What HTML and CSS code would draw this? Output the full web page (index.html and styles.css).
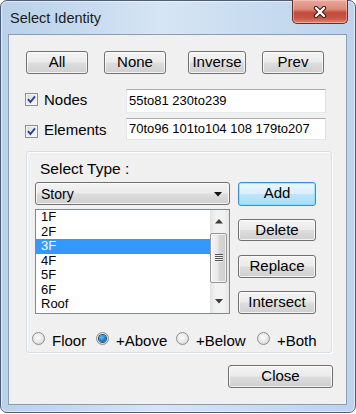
FILE: index.html
```html
<!DOCTYPE html>
<html lang="en">
<head>
    <meta charset="UTF-8">
    <meta name="viewport" content="width=device-width, initial-scale=1.0">
    <title>Select Identity</title>
    <link rel="stylesheet" href="styles.css">
</head>
<body>

<div class="window">
    <div class="titlebar">
        <span class="title">Select Identity</span>
        <div class="close-x">
            <svg width="16" height="12" viewBox="0 0 16 12">
                <path d="M4 2 L12 10 M12 2 L4 10" stroke="#3a1712" stroke-width="4.4" stroke-linecap="round"/>
                <path d="M4 2 L12 10 M12 2 L4 10" stroke="#ffffff" stroke-width="2.4" stroke-linecap="round"/>
            </svg>
        </div>
    </div>

    <div class="client">
        <div class="btn-row">
            <button class="btn btn-62">All</button>
            <button class="btn btn-62 gap-16">None</button>
            <button class="btn btn-58 gap-22">Inverse</button>
            <button class="btn btn-62 gap-16">Prev</button>
        </div>

        <div class="field-row nodes-row">
            <span class="checkbox">
                <svg width="11" height="11" viewBox="0 0 11 11"><path d="M2 5.2 L4.4 8 L9 2.4" fill="none" stroke="#23449a" stroke-width="1.9"/></svg>
            </span>
            <span class="field-label">Nodes</span>
            <div class="textbox">55to81 230to239</div>
        </div>

        <div class="field-row elements-row">
            <span class="checkbox">
                <svg width="11" height="11" viewBox="0 0 11 11"><path d="M2 5.2 L4.4 8 L9 2.4" fill="none" stroke="#23449a" stroke-width="1.9"/></svg>
            </span>
            <span class="field-label">Elements</span>
            <div class="textbox">70to96 101to104 108 179to207</div>
        </div>

        <div class="group">
            <div class="group-label">Select Type :</div>
            <div class="type-area">
                <div class="type-left">
                    <div class="combo">
                        <span>Story</span>
                        <svg class="combo-arrow" width="8" height="5" viewBox="0 0 8 5"><path d="M0 0 H8 L4 4.5 Z" fill="#111"/></svg>
                    </div>
                    <div class="listbox">
                        <ul class="items">
                            <li>1F</li>
                            <li>2F</li>
                            <li class="selected">3F</li>
                            <li>4F</li>
                            <li>5F</li>
                            <li>6F</li>
                            <li>Roof</li>
                        </ul>
                        <div class="scrollbar">
                            <div class="sb-arrow">
                                <svg width="8" height="5" viewBox="0 0 8 5"><path d="M0 4.5 H8 L4 0 Z" fill="#3c3c3c"/></svg>
                            </div>
                            <div class="sb-thumb"><span class="grip"></span></div>
                            <div class="sb-track"></div>
                            <div class="sb-arrow">
                                <svg width="8" height="5" viewBox="0 0 8 5"><path d="M0 0 H8 L4 4.5 Z" fill="#3c3c3c"/></svg>
                            </div>
                        </div>
                    </div>
                </div>
                <div class="type-right">
                    <button class="btn btn-side btn-default">Add</button>
                    <button class="btn btn-side mt-13">Delete</button>
                    <button class="btn btn-side mt-14">Replace</button>
                    <button class="btn btn-side mt-13">Intersect</button>
                </div>
            </div>

            <div class="radio-row">
                <div class="option"><span class="radio"></span><span class="opt-label">Floor</span></div>
                <div class="option"><span class="radio checked"><span class="dot"></span></span><span class="opt-label">+Above</span></div>
                <div class="option"><span class="radio"></span><span class="opt-label">+Below</span></div>
                <div class="option"><span class="radio"></span><span class="opt-label">+Both</span></div>
            </div>
        </div>

        <div class="close-row">
            <button class="btn btn-close">Close</button>
        </div>
    </div>
</div>

</body>
</html>
```

FILE: styles.css
```css
body {
    margin: 0;
    background: #ffffff;
    font-family: "Liberation Sans", Arial, sans-serif;
    color: #000;
}

/* window frame */
.window {
    width: 356px;
    height: 413px;
    box-sizing: border-box;
    border: 1px solid #4b5d78;
    border-radius: 7px;
    background: linear-gradient(90deg, #bad1ea 0%, #c8dbef 25%, #d6e5f4 45%, #c9dcf0 70%, #bdd3ec 100%);
    box-shadow: inset 0 0 0 1px rgba(255, 255, 255, 0.55);
    display: flex;
    flex-direction: column;
}
.titlebar {
    height: 33px;
    display: flex;
    align-items: flex-start;
}
.title {
    font-size: 14.5px;
    line-height: 18px;
    margin: 8px 0 0 9px;
    color: #1b1b1b;
}
.close-x {
    margin: -1px 7px 0 auto;
    width: 56px;
    height: 24px;
    box-sizing: border-box;
    border: 1px solid #6e2c22;
    border-top: none;
    border-radius: 0 0 5px 5px;
    background: linear-gradient(#e9a99c 0%, #dc8b7c 40%, #c4493a 55%, #c85646 80%, #dc8a72 100%);
    box-shadow: inset 0 0 0 1px rgba(255, 220, 210, 0.45);
    display: flex;
    align-items: center;
    justify-content: center;
}

/* client area */
.client {
    margin: 0 8px 0 7px;
    height: 371px;
    box-sizing: border-box;
    border: 1px solid #8b9db5;
    background: #f0f0f0;
}

/* buttons */
.btn {
    height: 23px;
    box-sizing: border-box;
    border: 1px solid #707070;
    border-radius: 3px;
    background: linear-gradient(#f3f3f3 0%, #ebebeb 48%, #dddddd 52%, #cfcfcf 100%);
    box-shadow: inset 0 0 0 1px rgba(255, 255, 255, 0.75);
    font-family: inherit;
    font-size: 15px;
    line-height: 18px;
    color: #000;
    padding: 0 0 1px;
    margin: 0;
}
.btn-62 { width: 62px; }
.btn-58 { width: 58px; }
.gap-16 { margin-left: 16px; }
.gap-22 { margin-left: 22px; }
.btn-side { width: 78px; }
.mt-13 { margin-top: 13px; }
.mt-14 { margin-top: 14px; }
.btn-default {
    height: 24px;
    border-color: #3c8dcc;
    background: linear-gradient(#eaf6fd 0%, #d9f0fc 48%, #bee6fd 52%, #a9dbf6 100%);
    box-shadow: inset 0 0 0 1px rgba(120, 220, 255, 0.6);
}
.btn-close { width: 105px; }

.btn-row {
    display: flex;
    margin-top: 16px;
    padding-left: 17px;
}

/* check rows */
.field-row {
    display: flex;
    align-items: flex-start;
    padding-left: 16px;
}
.nodes-row {
    margin-top: 15px;
    height: 24px;
}
.elements-row {
    margin-top: 5px;
    height: 22px;
}
.checkbox {
    width: 13px;
    height: 13px;
    box-sizing: border-box;
    border: 1px solid #8e8f8f;
    background: linear-gradient(135deg, #dadada, #fbfbfb);
    box-shadow: inset 0 0 0 1px #f4f4f4;
    display: flex;
    align-items: center;
    justify-content: center;
}
.nodes-row .checkbox { margin-top: 4px; }
.elements-row .checkbox { margin-top: 7px; }
.field-label {
    font-size: 15px;
    line-height: 18px;
    margin-left: 6px;
}
.nodes-row .field-label { margin-top: 2px; }
.elements-row .field-label { margin-top: 3px; }
.textbox {
    margin: 0 20px 0 auto;
    width: 200px;
    height: 100%;
    box-sizing: border-box;
    border: 1px solid;
    border-color: #abadb3 #dbdfe6 #e3e9ef #e2e3ea;
    background: #fff;
    padding: 0 2px;
    font-size: 13px;
    line-height: 16px;
    display: flex;
    align-items: center;
    white-space: nowrap;
}

/* group */
.group {
    margin: 11px 0 0 17px;
    width: 306px;
    height: 202px;
    box-sizing: border-box;
    border: 1px solid #d5dfe5;
    border-radius: 3px;
    box-shadow: inset 1px 1px 0 #fff, 1px 1px 0 #fff;
}
.group-label {
    margin: 8px 0 0 13px;
    font-size: 15.5px;
    line-height: 18px;
}
.type-area {
    display: flex;
    margin-top: 4px;
    padding-left: 8px;
    height: 132px;
}
.type-left {
    width: 195px;
}
.type-right {
    margin-left: 8px;
    display: flex;
    flex-direction: column;
}
.combo {
    height: 23px;
    box-sizing: border-box;
    border: 1px solid #707070;
    border-radius: 3px;
    background: linear-gradient(#f3f3f3 0%, #ebebeb 48%, #dddddd 52%, #cfcfcf 100%);
    box-shadow: inset 0 0 0 1px rgba(255, 255, 255, 0.75);
    display: flex;
    align-items: center;
    justify-content: space-between;
    padding: 0 7px 0 5px;
    font-size: 14px;
    line-height: 16px;
}
.combo-arrow { margin-top: 2px; }

.listbox {
    margin-top: 4px;
    height: 105px;
    box-sizing: border-box;
    border: 1px solid #828790;
    background: #fff;
    display: flex;
}
.items {
    list-style: none;
    margin: 0;
    padding: 0;
    flex: 1;
}
.items li {
    height: 14.5px;
    line-height: 14.5px;
    font-size: 13px;
    padding-left: 5px;
}
.items li.selected {
    background: #3399ff;
    color: #fff;
}
.scrollbar {
    width: 19px;
    display: flex;
    flex-direction: column;
    background: linear-gradient(90deg, #e3e3e3 0%, #f2f2f2 30%, #f2f2f2 70%, #e6e6e6 100%);
}
.sb-arrow {
    height: 23px;
    display: flex;
    align-items: center;
    justify-content: center;
    padding-right: 2px;
}
.sb-thumb {
    width: 17px;
    height: 50px;
    box-sizing: border-box;
    border: 1px solid #959595;
    border-radius: 2px;
    background: linear-gradient(90deg, #f4f4f4 0%, #e8e8e8 45%, #d6d6d6 55%, #cfcfcf 100%);
    box-shadow: inset 0 0 0 1px rgba(255, 255, 255, 0.7);
    display: flex;
    align-items: center;
    justify-content: center;
}
.grip {
    width: 8px;
    height: 8px;
    background: repeating-linear-gradient(#555 0 1px, #eee 1px 2px);
}
.sb-track { flex: 1; }

/* radios */
.radio-row {
    display: grid;
    grid-template-columns: 64px 80px 81px auto;
    margin-top: 16px;
    padding-left: 5px;
}
.option {
    display: flex;
    align-items: flex-start;
}
.radio {
    width: 13px;
    height: 13px;
    margin-top: 2px;
    box-sizing: border-box;
    border-radius: 50%;
    border: 1px solid #8d8d8d;
    background: radial-gradient(circle at 45% 40%, #fdfdfd 0, #e6e6e6 55%, #c4c4c4 100%);
    display: flex;
    align-items: center;
    justify-content: center;
}
.radio .dot {
    width: 7px;
    height: 7px;
    border-radius: 50%;
    background: radial-gradient(circle at 40% 35%, #6ec4f5 0, #1d7fd0 50%, #0c4d8e 100%);
    box-shadow: 0 0 0 1px #1a4f7e;
}
.opt-label {
    margin: 2px 0 0 7px;
    font-size: 15px;
    line-height: 18px;
}

.close-row {
    display: flex;
    justify-content: flex-end;
    margin-top: 12px;
    padding-right: 13px;
}
```
